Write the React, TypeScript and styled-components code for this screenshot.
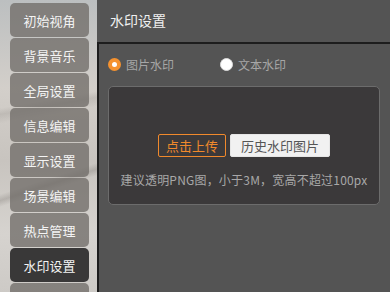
import React, { useState } from 'react';
import styled, { createGlobalStyle } from 'styled-components';

const GlobalStyle = createGlobalStyle`
  html, body {
    margin: 0;
    padding: 0;
    height: 100%;
    overflow: hidden;
  }
  body {
    font-family: 'Noto Sans CJK SC', 'Noto Sans', sans-serif;
  }
`;

const Layout = styled.div`
  display: flex;
  height: 100vh;
  width: 100vw;
`;

const SideBar = styled.nav`
  width: 97px;
  flex-shrink: 0;
  overflow: hidden;
  padding: 3px 0 0 10px;
  box-sizing: border-box;
  display: flex;
  flex-direction: column;
  gap: 1px;
  background:
    linear-gradient(162deg, transparent 60%, rgba(60, 55, 50, 0.18) 62%, transparent 64%),
    linear-gradient(170deg, transparent 35%, rgba(70, 65, 60, 0.12) 37%, transparent 40%),
    linear-gradient(180deg, #bcbfc0 0%, #d3cfca 30%, #c8c4bf 55%, #d6d3cf 80%, #cdcac6 100%);
`;

const MenuItem = styled.div<{ $active?: boolean }>`
  flex-shrink: 0;
  width: 79px;
  height: 34px;
  border-radius: 5px;
  display: flex;
  align-items: center;
  justify-content: center;
  font-size: 13px;
  color: #f4f4f4;
  background: ${(p) => (p.$active ? '#393838' : 'rgba(110, 106, 102, 0.76)')};
  cursor: pointer;
`;

const Panel = styled.section`
  flex: 1;
  display: flex;
  flex-direction: column;
  background: #545454;
`;

const PanelHeader = styled.header`
  height: 42px;
  flex-shrink: 0;
  display: flex;
  align-items: center;
  padding: 0 0 2px 13px;
  box-sizing: border-box;
  font-size: 14px;
  color: #f0f0f0;
`;

const PanelBody = styled.div`
  flex: 1;
  border-top: 2px solid #1d1d1d;
  border-left: 2px solid #1d1d1d;
  padding: 13px 10px 0 9px;
`;

const RadioRow = styled.div`
  display: flex;
  align-items: center;
  height: 15px;
`;

const RadioLabel = styled.label<{ $width: number }>`
  display: flex;
  align-items: center;
  gap: 5px;
  width: ${(p) => p.$width}px;
  font-size: 12px;
  color: #a6a6a6;
  cursor: pointer;
`;

const RadioDot = styled.span<{ $checked?: boolean }>`
  width: 13px;
  height: 13px;
  border-radius: 50%;
  box-sizing: border-box;
  background: #fff;
  border: ${(p) => (p.$checked ? '4px solid #f5922f' : '1px solid #ddd')};
`;

const UploadCard = styled.div`
  margin-top: 14px;
  height: 119px;
  box-sizing: border-box;
  background: #3b393a;
  border: 1px solid #6c6c6c;
  border-radius: 5px;
  display: flex;
  flex-direction: column;
  align-items: center;
  padding-top: 47px;
`;

const ButtonRow = styled.div`
  display: flex;
  gap: 4px;
`;

const Button = styled.button<{ $primary?: boolean }>`
  height: 23px;
  box-sizing: border-box;
  padding: 0 ${(p) => (p.$primary ? 7 : 10)}px;
  font-family: inherit;
  font-size: 13px;
  line-height: 1;
  border-radius: 2px;
  cursor: pointer;
  border: 1px solid ${(p) => (p.$primary ? '#f0892c' : '#e6e6e6')};
  background: ${(p) => (p.$primary ? 'transparent' : '#f1f1f1')};
  color: ${(p) => (p.$primary ? '#f0892c' : '#555')};
`;

const Hint = styled.p`
  margin: 14px 0 0;
  font-size: 12px;
  letter-spacing: 0.2px;
  color: #a8a8a8;
`;

const menus = ['初始视角', '背景音乐', '全局设置', '信息编辑', '显示设置', '场景编辑', '热点管理', '水印设置'];

function App() {
  const [mode, setMode] = useState<'image' | 'text'>('image');

  return (
    <Layout>
      <GlobalStyle />
      <SideBar>
        {menus.map((m) => (
          <MenuItem key={m} $active={m === '水印设置'}>
            {m}
          </MenuItem>
        ))}
        <MenuItem aria-hidden />
      </SideBar>
      <Panel>
        <PanelHeader>水印设置</PanelHeader>
        <PanelBody>
          <RadioRow>
            <RadioLabel $width={112} onClick={() => setMode('image')}>
              <RadioDot $checked={mode === 'image'} />
              图片水印
            </RadioLabel>
            <RadioLabel $width={100} onClick={() => setMode('text')}>
              <RadioDot $checked={mode === 'text'} />
              文本水印
            </RadioLabel>
          </RadioRow>
          <UploadCard>
            <ButtonRow>
              <Button $primary>点击上传</Button>
              <Button>历史水印图片</Button>
            </ButtonRow>
            <Hint>建议透明PNG图，小于3M，宽高不超过100px</Hint>
          </UploadCard>
        </PanelBody>
      </Panel>
    </Layout>
  );
}

export default App;
